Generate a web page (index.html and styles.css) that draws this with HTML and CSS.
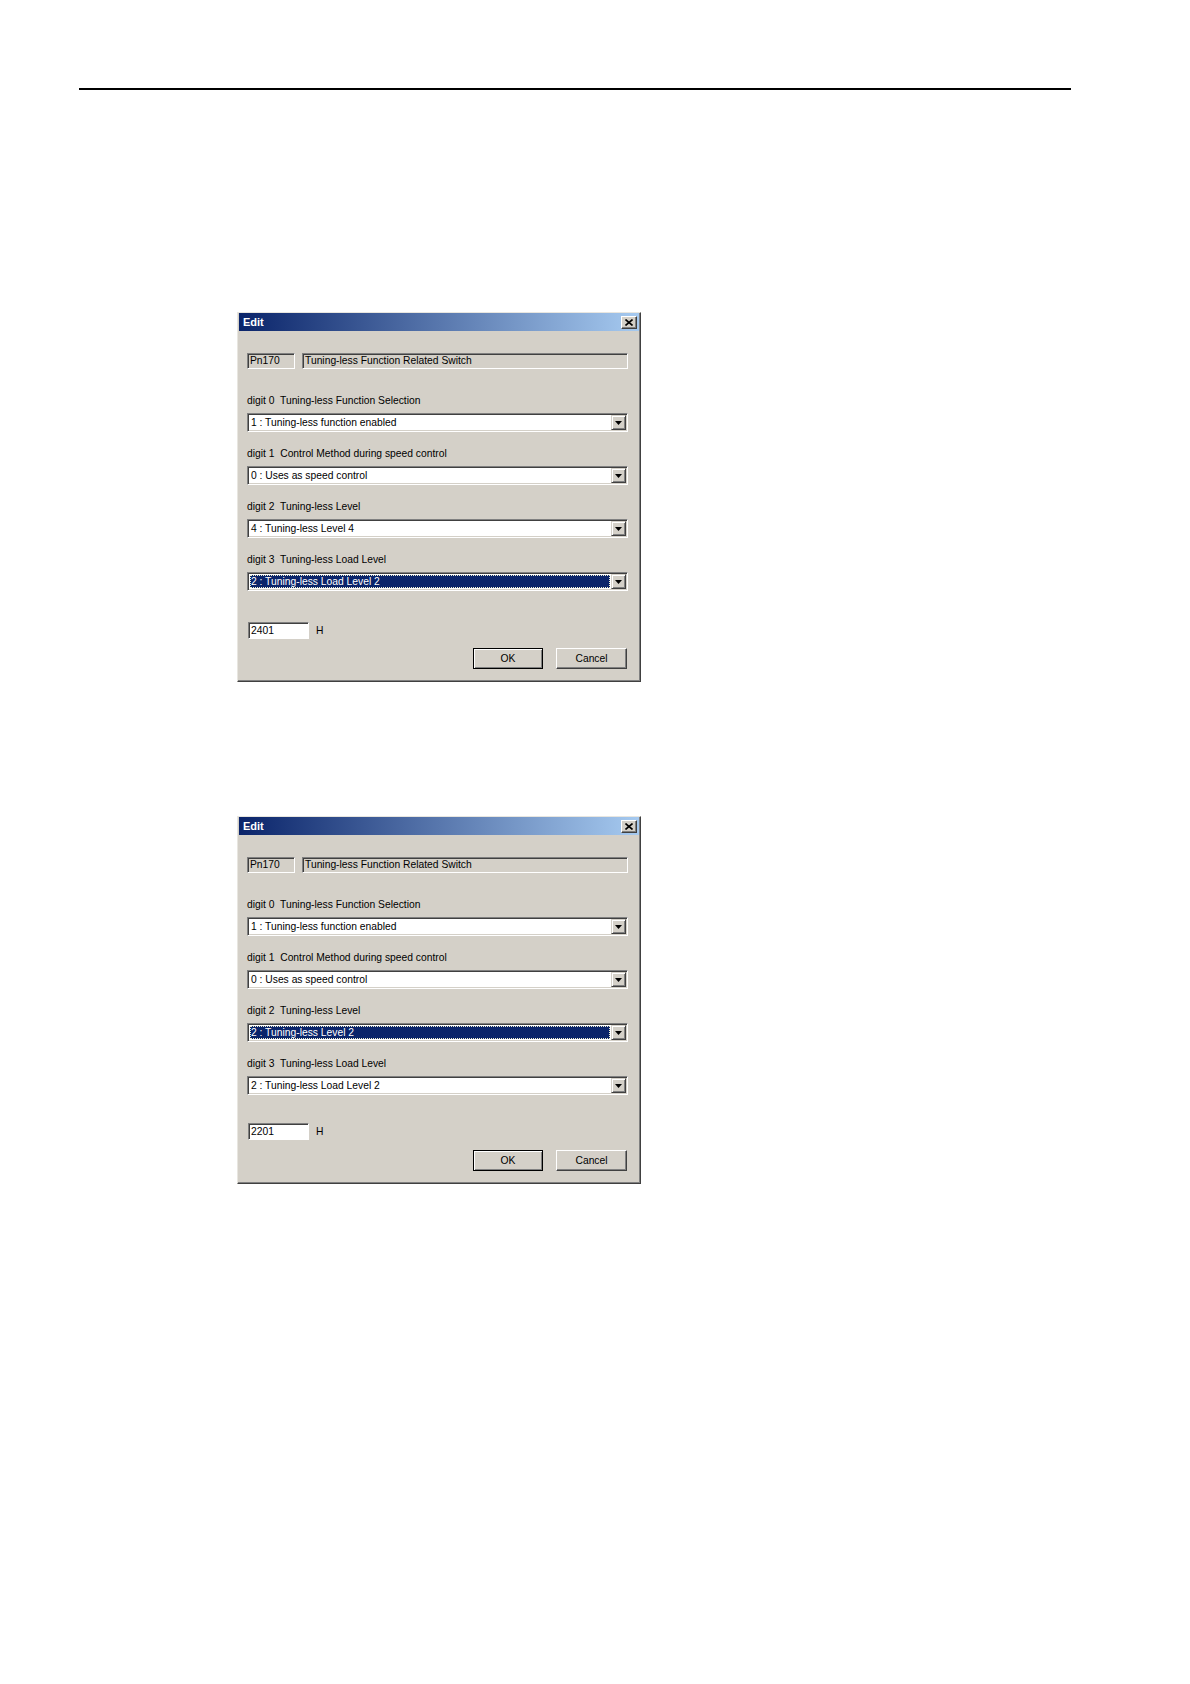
FILE: index.html
```html
<!DOCTYPE html>
<html>
<head>
<meta charset="utf-8">
<title>Edit</title>
<link rel="stylesheet" href="styles.css">
</head>
<body>
<div class="page">
  <div class="rule"></div>

  <div class="dialog dialog-first">
    <div class="titlebar">
      <span class="title">Edit</span>
      <span class="close"><svg width="8" height="7" viewBox="0 0 8 7"><path d="M0.5 0.5 L7.5 6.5 M7.5 0.5 L0.5 6.5" stroke="#000" stroke-width="1.6" fill="none"/></svg></span>
    </div>
    <div class="content">
      <div class="field-row">
        <div class="field field-pn">Pn170</div>
        <div class="field field-desc">Tuning-less Function Related Switch</div>
      </div>
      <div class="groups">
        <div class="group">
          <div class="label">digit 0&nbsp; Tuning-less Function Selection</div>
          <div class="combo"><div class="combo-text">1 : Tuning-less function enabled</div><div class="combo-btn"><svg width="7" height="4" viewBox="0 0 7 4"><path d="M0 0 H7 L3.5 4 Z" fill="#000"/></svg></div></div>
        </div>
        <div class="group">
          <div class="label">digit 1&nbsp; Control Method during speed control</div>
          <div class="combo"><div class="combo-text">0 : Uses as speed control</div><div class="combo-btn"><svg width="7" height="4" viewBox="0 0 7 4"><path d="M0 0 H7 L3.5 4 Z" fill="#000"/></svg></div></div>
        </div>
        <div class="group">
          <div class="label">digit 2&nbsp; Tuning-less Level</div>
          <div class="combo"><div class="combo-text">4 : Tuning-less Level 4</div><div class="combo-btn"><svg width="7" height="4" viewBox="0 0 7 4"><path d="M0 0 H7 L3.5 4 Z" fill="#000"/></svg></div></div>
        </div>
        <div class="group">
          <div class="label">digit 3&nbsp; Tuning-less Load Level</div>
          <div class="combo"><div class="combo-text selected">2 : Tuning-less Load Level 2</div><div class="combo-btn"><svg width="7" height="4" viewBox="0 0 7 4"><path d="M0 0 H7 L3.5 4 Z" fill="#000"/></svg></div></div>
        </div>
      </div>
      <div class="value-row">
        <div class="field field-value">2401</div>
        <span class="unit">H</span>
      </div>
      <div class="buttons">
        <div class="btn btn-default">OK</div>
        <div class="btn btn-cancel">Cancel</div>
      </div>
    </div>
  </div>

  <div class="dialog dialog-second">
    <div class="titlebar">
      <span class="title">Edit</span>
      <span class="close"><svg width="8" height="7" viewBox="0 0 8 7"><path d="M0.5 0.5 L7.5 6.5 M7.5 0.5 L0.5 6.5" stroke="#000" stroke-width="1.6" fill="none"/></svg></span>
    </div>
    <div class="content">
      <div class="field-row">
        <div class="field field-pn">Pn170</div>
        <div class="field field-desc">Tuning-less Function Related Switch</div>
      </div>
      <div class="groups">
        <div class="group">
          <div class="label">digit 0&nbsp; Tuning-less Function Selection</div>
          <div class="combo"><div class="combo-text">1 : Tuning-less function enabled</div><div class="combo-btn"><svg width="7" height="4" viewBox="0 0 7 4"><path d="M0 0 H7 L3.5 4 Z" fill="#000"/></svg></div></div>
        </div>
        <div class="group">
          <div class="label">digit 1&nbsp; Control Method during speed control</div>
          <div class="combo"><div class="combo-text">0 : Uses as speed control</div><div class="combo-btn"><svg width="7" height="4" viewBox="0 0 7 4"><path d="M0 0 H7 L3.5 4 Z" fill="#000"/></svg></div></div>
        </div>
        <div class="group">
          <div class="label">digit 2&nbsp; Tuning-less Level</div>
          <div class="combo"><div class="combo-text selected">2 : Tuning-less Level 2</div><div class="combo-btn"><svg width="7" height="4" viewBox="0 0 7 4"><path d="M0 0 H7 L3.5 4 Z" fill="#000"/></svg></div></div>
        </div>
        <div class="group">
          <div class="label">digit 3&nbsp; Tuning-less Load Level</div>
          <div class="combo"><div class="combo-text">2 : Tuning-less Load Level 2</div><div class="combo-btn"><svg width="7" height="4" viewBox="0 0 7 4"><path d="M0 0 H7 L3.5 4 Z" fill="#000"/></svg></div></div>
        </div>
      </div>
      <div class="value-row">
        <div class="field field-value">2201</div>
        <span class="unit">H</span>
      </div>
      <div class="buttons">
        <div class="btn btn-default">OK</div>
        <div class="btn btn-cancel">Cancel</div>
      </div>
    </div>
  </div>
</div>
</body>
</html>
```
FILE: styles.css
```css
html, body {
  margin: 0;
  padding: 0;
  background: #fff;
}
body {
  width: 1190px;
  height: 1684px;
  font-family: "Liberation Sans", Arial, sans-serif;
  font-size: 10.3px;
  color: #000;
}
.page {
  padding-top: 88px;
}
.rule {
  margin-left: 79px;
  width: 992px;
  height: 2px;
  background: #000;
}
.dialog {
  box-sizing: border-box;
  width: 404px;
  margin-left: 237px;
  background: #d4d0c8;
  border: 1px solid;
  border-color: #e8e6e0 #404040 #404040 #e8e6e0;
  box-shadow: inset -1px -1px 0 #808080;
}
.dialog-first {
  margin-top: 222px;
}
.dialog-second {
  margin-top: 134px;
}
.titlebar {
  height: 18px;
  margin: 0 1px;
  display: flex;
  align-items: center;
  justify-content: space-between;
  padding: 0 2px 0 4px;
  background: linear-gradient(to right, #0a246a, #a6caf0);
}
.title {
  color: #fff;
  font-weight: bold;
  font-size: 11px;
  line-height: 18px;
}
.close {
  box-sizing: border-box;
  width: 16px;
  height: 13px;
  display: flex;
  align-items: center;
  justify-content: center;
  background: #d4d0c8;
  border: 1px solid;
  border-color: #fff #404040 #404040 #fff;
  box-shadow: inset -1px -1px 0 #808080;
}
.content {
  display: flex;
  flex-direction: column;
  padding: 22px 12px 12px 9px;
}
.field {
  box-sizing: border-box;
  height: 16px;
  line-height: 14px;
  padding: 0 2px;
  border: 1px solid;
  border-color: #808080 #fff #fff #808080;
  box-shadow: inset 1px 1px 0 #404040;
  white-space: nowrap;
  overflow: hidden;
}
.field-row {
  display: flex;
  gap: 7px;
}
.field-pn {
  width: 48px;
}
.field-desc {
  flex: 1;
}
.groups {
  display: flex;
  flex-direction: column;
  gap: 15px;
  margin-top: 25px;
}
.group {
  display: flex;
  flex-direction: column;
  gap: 5px;
}
.label {
  height: 14px;
  line-height: 14px;
  white-space: nowrap;
}
.combo {
  box-sizing: border-box;
  height: 19px;
  display: flex;
  align-items: stretch;
  background: #fff;
  border: 1px solid;
  border-color: #808080 #fff #fff #808080;
  box-shadow: inset 1px 1px 0 #404040, inset -1px -1px 0 #d4d0c8;
  padding: 2px;
}
.combo-text {
  flex: 1;
  line-height: 13px;
  padding-left: 1px;
  white-space: nowrap;
}
.combo-text.selected {
  background: #0a246a;
  color: #fff;
  outline: 1px dotted #f0f0d0;
  outline-offset: -1px;
}
.combo-btn {
  box-sizing: border-box;
  width: 15px;
  margin: -1px -1px -1px 1px;
  display: flex;
  align-items: center;
  justify-content: center;
  background: #d4d0c8;
  border: 1px solid;
  border-color: #d4d0c8 #404040 #404040 #d4d0c8;
  box-shadow: inset 1px 1px 0 #fff, inset -1px -1px 0 #808080;
}
.value-row {
  display: flex;
  align-items: center;
  gap: 7px;
  margin-top: 28px;
  margin-left: 1px;
}
.dialog-first .value-row {
  margin-top: 31px;
}
.dialog-first .buttons {
  margin-top: 9px;
}
.field-value {
  width: 61px;
  height: 17px;
  line-height: 15px;
  background: #fff;
}
.unit {
  line-height: 17px;
}
.buttons {
  display: flex;
  justify-content: flex-end;
  gap: 13px;
  margin-top: 10px;
  margin-right: 1px;
}
.btn {
  box-sizing: border-box;
  height: 21px;
  line-height: 19px;
  text-align: center;
  background: #d4d0c8;
  border: 1px solid;
}
.btn-default {
  width: 70px;
  border-color: #000;
  box-shadow: inset 1px 1px 0 #fff, inset -1px -1px 0 #808080;
}
.btn-cancel {
  width: 71px;
  border-color: #fff #404040 #404040 #fff;
  box-shadow: inset -1px -1px 0 #808080;
}
```
